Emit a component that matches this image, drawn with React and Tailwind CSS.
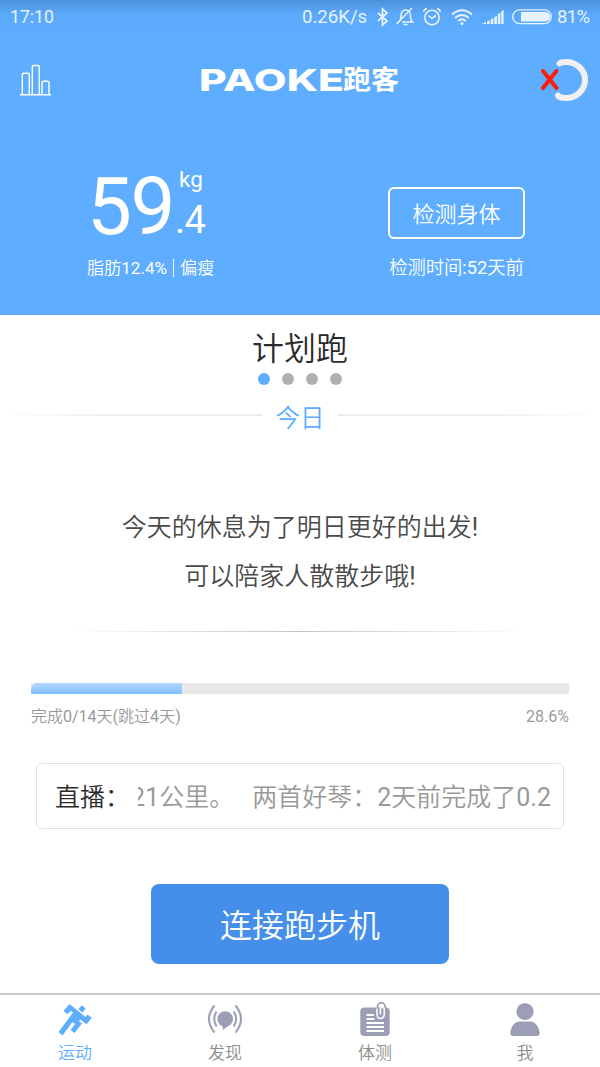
import React from "react";

function StatusBar() {
  return (
    <div className="flex h-[34px] items-center bg-linear-to-b from-[#4c92d8] via-[#5ba8fa] via-40% to-[#5eadff] pl-[10px] pr-[10px] text-[18px] leading-[34px] text-white/85">
      <span className="w-[44px] text-[17.6px]">17:10</span>
      <span className="ml-auto w-[66px] whitespace-nowrap text-[18.6px]">0.26K/s</span>
      <svg className="ml-[8px] h-[20px] w-[14px]" viewBox="0 0 14 20" fill="none" stroke="currentColor" strokeWidth="1.7">
        <path d="M2 6l9 8-4.500 4V2L11 6l-9 8" />
      </svg>
      <svg className="ml-[5px] h-[20px] w-[20px]" viewBox="0 0 20 20" fill="none" stroke="currentColor" strokeWidth="1.500">
        <path d="M7 15h10.500c-2-1.500-2-3-2-6 0-4-2.500-6-5-6S6 5 6 9c0 2.500-.5 4.500-2 6M8.500 17.500h4M1.500 17L17 1" />
      </svg>
      <svg className="ml-[7px] h-[20px] w-[20px]" viewBox="0 0 20 20" fill="none" stroke="currentColor" strokeWidth="1.600">
        <circle cx="10" cy="10.500" r="7.200" />
        <path d="M6.500 8.500L10 11.500l4-3M1.500 5Q2 2.200 5 1.500M15 1.500q3 .7 3.500 3.500" />
      </svg>
      <svg className="ml-[9px] h-[18px] w-[22px]" viewBox="0 0 22 18" fill="none" stroke="currentColor" strokeWidth="2">
        <path d="M1 6.500q10-8.500 20 0M4 10q7-6 14 0M7.200 13q3.800-3.300 7.600 0" />
        <circle cx="11" cy="15.500" r="1.500" fill="currentColor" stroke="none" />
      </svg>
      <svg className="ml-[9px] h-[16px] w-[22px]" viewBox="0 0 22 16" fill="currentColor">
        <path d="M0 15l4-2V15zM5 12.500l2.700-1.200V15H5zM8.700 10.500l2.700-1.300V15H8.700zM12.300 8.200L15 6.800V15h-2.700zM15.900 5l2.400-1.200V15h-2.400zM19.200 2.500L21.600 1v14h-2.400z" />
      </svg>
      <svg className="ml-[8px] h-[16px] w-[40px]" viewBox="0 0 40 16">
        <rect x=".7" y=".9" width="38.600" height="13.700" rx="6.850" fill="none" stroke="currentColor" strokeWidth="1.300" />
        <path d="M9 3h24.500a4.700 4.700 0 010 9.500H9z" fill="currentColor" />
      </svg>
      <span className="ml-[5px] w-[33px] text-[18.400px] tracking-[-0.6px]">81%</span>
    </div>
  );
}

function TitleBar() {
  return (
    <div className="flex h-[92px] items-center pl-[20px] pr-[11px]">
      <svg className="h-[34px] w-[50px]" viewBox="0 0 50 34" fill="none" stroke="#fff" strokeWidth="1.400">
        <path d="M0 31.700h31M2.300 31.500V11.700q0-1.500 1.500-1.500h4q1.500 0 1.500 1.500v20M12.300 31.500V4q0-1.500 1.500-1.500h4q1.500 0 1.500 1.500v27.500M22 31.500V19.700q0-1.500 1.500-1.500h4q1.500 0 1.500 1.500v12" />
      </svg>
      <svg className="ml-[128px] mr-auto h-[34px] w-[208px] overflow-visible" viewBox="0 0 208 34" fill="#fff">
        <text x="1" y="27.500" fontFamily="Inter, sans-serif" fontWeight="800" fontSize="30.500" textLength="145" lengthAdjust="spacingAndGlyphs">PAOKE</text>
        <text x="145" y="26" fontFamily="'Noto Sans CJK SC', sans-serif" fontWeight="700" fontSize="26" textLength="56" lengthAdjust="spacingAndGlyphs">跑客</text>
      </svg>
      <svg className="h-[44px] w-[50px]" viewBox="0 0 50 44" fill="none" strokeLinecap="round">
        <path d="M20.500 5.500C21.500 4.500 24 4 27 4C37 4 46 11.500 46 22S37 40 27 40C23 40 20 39 19 37.500" stroke="#f0f0f0" strokeWidth="6" />
        <path d="M4 13l13.500 17M17.500 13L4 30" stroke="#ff1b05" strokeWidth="4" />
      </svg>
    </div>
  );
}

function BodyStats() {
  return (
    <div className="flex h-[189px] justify-between pl-[87px] pr-[75px] pt-[40px] text-white">
      <div>
        <div className="flex h-[80px]">
          <span className="w-[88px] text-[80px] leading-[82px] tracking-[-1.5px]">59</span>
          <div className="flex flex-col">
            <span className="h-[35px] pl-[4px] text-[22.500px] leading-[27px]">kg</span>
            <span className="text-[38px] leading-[38px] tracking-[-0.5px]">.4</span>
          </div>
        </div>
        <div className="mt-[10px] flex h-[24px] items-center text-[17.100px] font-[350] leading-[24px]">
          <span>脂肪<span className="font-normal">12.4%</span></span>
          <span className="mx-[6px] h-[18px] w-px bg-white" />
          <span>偏瘦</span>
        </div>
      </div>
      <div className="flex flex-col items-center pt-[21px]">
        <button className="h-[52px] w-[137px] rounded-md border-2 border-white text-[22px] font-[350] leading-[51px]">检测身体</button>
        <span className="mt-[16px] whitespace-nowrap text-[18.300px] font-[350] leading-[26px]">检测时间<span className="font-normal">:52</span>天前</span>
      </div>
    </div>
  );
}

function PlanSection() {
  return (
    <section className="flex h-[355px] flex-col items-center">
      <h1 className="mt-[13px] h-[42px] text-[32px] font-[350] leading-[42px] text-[#2b2b2b]">计划跑</h1>
      <div className="mt-[3px] flex gap-[12px]">
        <span className="size-[12px] rounded-full bg-[#5eadff]" />
        <span className="size-[12px] rounded-full bg-[#b0b0b0]" />
        <span className="size-[12px] rounded-full bg-[#b0b0b0]" />
        <span className="size-[12px] rounded-full bg-[#b0b0b0]" />
      </div>
      <div className="mt-[15px] flex h-[32px] w-full items-center">
        <span className="mb-[2px] h-[2px] flex-1 bg-linear-to-r from-white via-[#ececec] to-[#ececec]" />
        <span className="w-[76px] pt-[5px] text-center text-[24.500px] font-[350] leading-[32px] text-[#5eadff]">今日</span>
        <span className="mb-[2px] h-[2px] flex-1 bg-linear-to-l from-white via-[#ececec] to-[#ececec]" />
      </div>
      <div className="mt-[71px] text-center text-[25px] font-[350] leading-[49px] text-[#4a4a4a]">
        <p>今天的休息为了明日更好的出发<span className="font-normal">!</span></p>
        <p>可以陪家人散散步哦<span className="font-normal">!</span></p>
      </div>
      <div className="mt-[30px] h-px w-[460px] bg-linear-to-r from-white via-[#c4c4c4] to-white" />
    </section>
  );
}

function Progress() {
  return (
    <div className="mt-[13px] h-[80px] px-[31px] text-[16px] leading-[22px] text-[#999]">
      <div className="h-[11px] bg-[#e8e8e8]">
        <div className="h-full w-[151px] rounded-tl-[7px] bg-linear-to-b from-[#b0d7ff] to-[#82bfff]" />
      </div>
      <div className="mt-[12px] flex justify-between">
        <span className="font-[350]">完成<span className="font-normal">0/14</span>天<span className="font-normal">(</span>跳过<span className="font-normal">4</span>天<span className="font-normal">)</span></span>
        <span>28.6%</span>
      </div>
    </div>
  );
}

function LiveTicker() {
  return (
    <div className="mx-[36px] flex h-[66px] items-center rounded-md border border-[#e0e0e0] pl-[18px] pr-[12px] pt-[4px] text-[25px] font-[350] leading-[60px]">
      <span className="w-[83px] shrink-0 whitespace-nowrap text-[#2b2b2b]">直播：</span>
      <div className="flex flex-1 justify-end overflow-hidden whitespace-nowrap text-[#999]">
        <span className="mr-[18px]"><span className="font-normal">21</span>公里。</span>
        <span>两首好琴：<span className="font-normal">2</span>天前完成了<span className="font-normal">0.2</span></span>
      </div>
    </div>
  );
}

const RunIcon = () => (
  <svg className="h-[34px] w-[36px]" viewBox="0 0 36 34" fill="#5eadff">
    <path d="M12.500 2L28.500 15l2-2.500 4.300 3.200-5.300 6.500L23 17.500l-1 1.500 3 2.500-7.500 9.500-4-3 4.500-6-2.500-2L5.500 33.500 1.500 30 13.800 13.500l2.200-2.800-2.200-1.900-3.300 3.500L6.500 9z" />
    <path d="M24.700 3.200l4 3.400-3.300 4-4-3.400z" />
  </svg>
);

const DiscoverIcon = () => (
  <svg className="h-[34px] w-[36px]" viewBox="0 0 36 34" fill="none" stroke="#9b9eb5" strokeWidth="2">
    <circle cx="18.200" cy="17" r="7.800" fill="#9b9eb5" stroke="none" />
    <path d="M15 23l1.200 5 4.300-4z" fill="#9b9eb5" stroke="none" />
    <path d="M7.500 3.500Q-3.500 17 7.500 30.500M9.500 9.500q-4.500 7.500 0 15M28.500 3.500q11 13.500 0 27M26.800 9.500q4.500 7.500 0 15" />
  </svg>
);

const ReportIcon = () => (
  <svg className="h-[34px] w-[36px]" viewBox="0 0 36 34">
    <rect x="3.300" y="5.500" width="29.400" height="28.500" rx="4" fill="#9b9eb5" />
    <path d="M9.500 13h7.500M9.500 17h8M9.500 21h17.500M9.500 25h17.500M9.500 29h17.500" stroke="#fff" strokeWidth="1.900" />
    <path d="M28.300 9V4.800a3.900 3.900 0 00-7.800 0V8" fill="none" stroke="#9b9eb5" strokeWidth="1.700" />
    <path d="M20 6.500v6.300a3.600 3.600 0 007.200 0V6.500q-2-2.500-3.800 0v6" fill="none" stroke="#fff" strokeWidth="1.500" />
  </svg>
);

const UserIcon = () => (
  <svg className="h-[34px] w-[36px]" viewBox="0 0 36 34" fill="#9b9eb5">
    <circle cx="18" cy="9.500" r="8.600" />
    <path d="M3.300 31C4 24 8 19.500 13 19.500h10c5 0 9 4.500 9.700 11.500q0 3-3 3H6.300q-3 0-3-3z" />
  </svg>
);

function TabBar() {
  return (
    <nav className="flex h-[74px] border-t-2 border-[#c8c8c8] bg-white text-[17px] font-[350] leading-[24px] text-[#8c8c8c]">
      <div className="flex flex-1 flex-col items-center pt-[7px] text-[#5eadff]"><RunIcon /><span className="mt-[5px]">运动</span></div>
      <div className="flex flex-1 flex-col items-center pt-[7px]"><DiscoverIcon /><span className="mt-[5px]">发现</span></div>
      <div className="flex flex-1 flex-col items-center pt-[7px]"><ReportIcon /><span className="mt-[5px]">体测</span></div>
      <div className="flex flex-1 flex-col items-center pt-[7px]"><UserIcon /><span className="mt-[5px]">我</span></div>
    </nav>
  );
}

export default function App() {
  return (
    <div className="flex h-[1067px] w-[600px] flex-col overflow-hidden bg-white font-['Roboto','Noto_Sans_CJK_SC',sans-serif]">
      <header className="h-[315px] shrink-0 bg-[#5eadff]">
        <StatusBar />
        <TitleBar />
        <BodyStats />
      </header>
      <main className="flex flex-1 flex-col">
        <PlanSection />
        <Progress />
        <LiveTicker />
        <button className="mx-auto mt-[55px] h-[80px] w-[298px] rounded-lg bg-[#458feb] pt-[4px] text-[32px] font-[350] leading-[76px] text-white">连接跑步机</button>
      </main>
      <TabBar />
    </div>
  );
}
